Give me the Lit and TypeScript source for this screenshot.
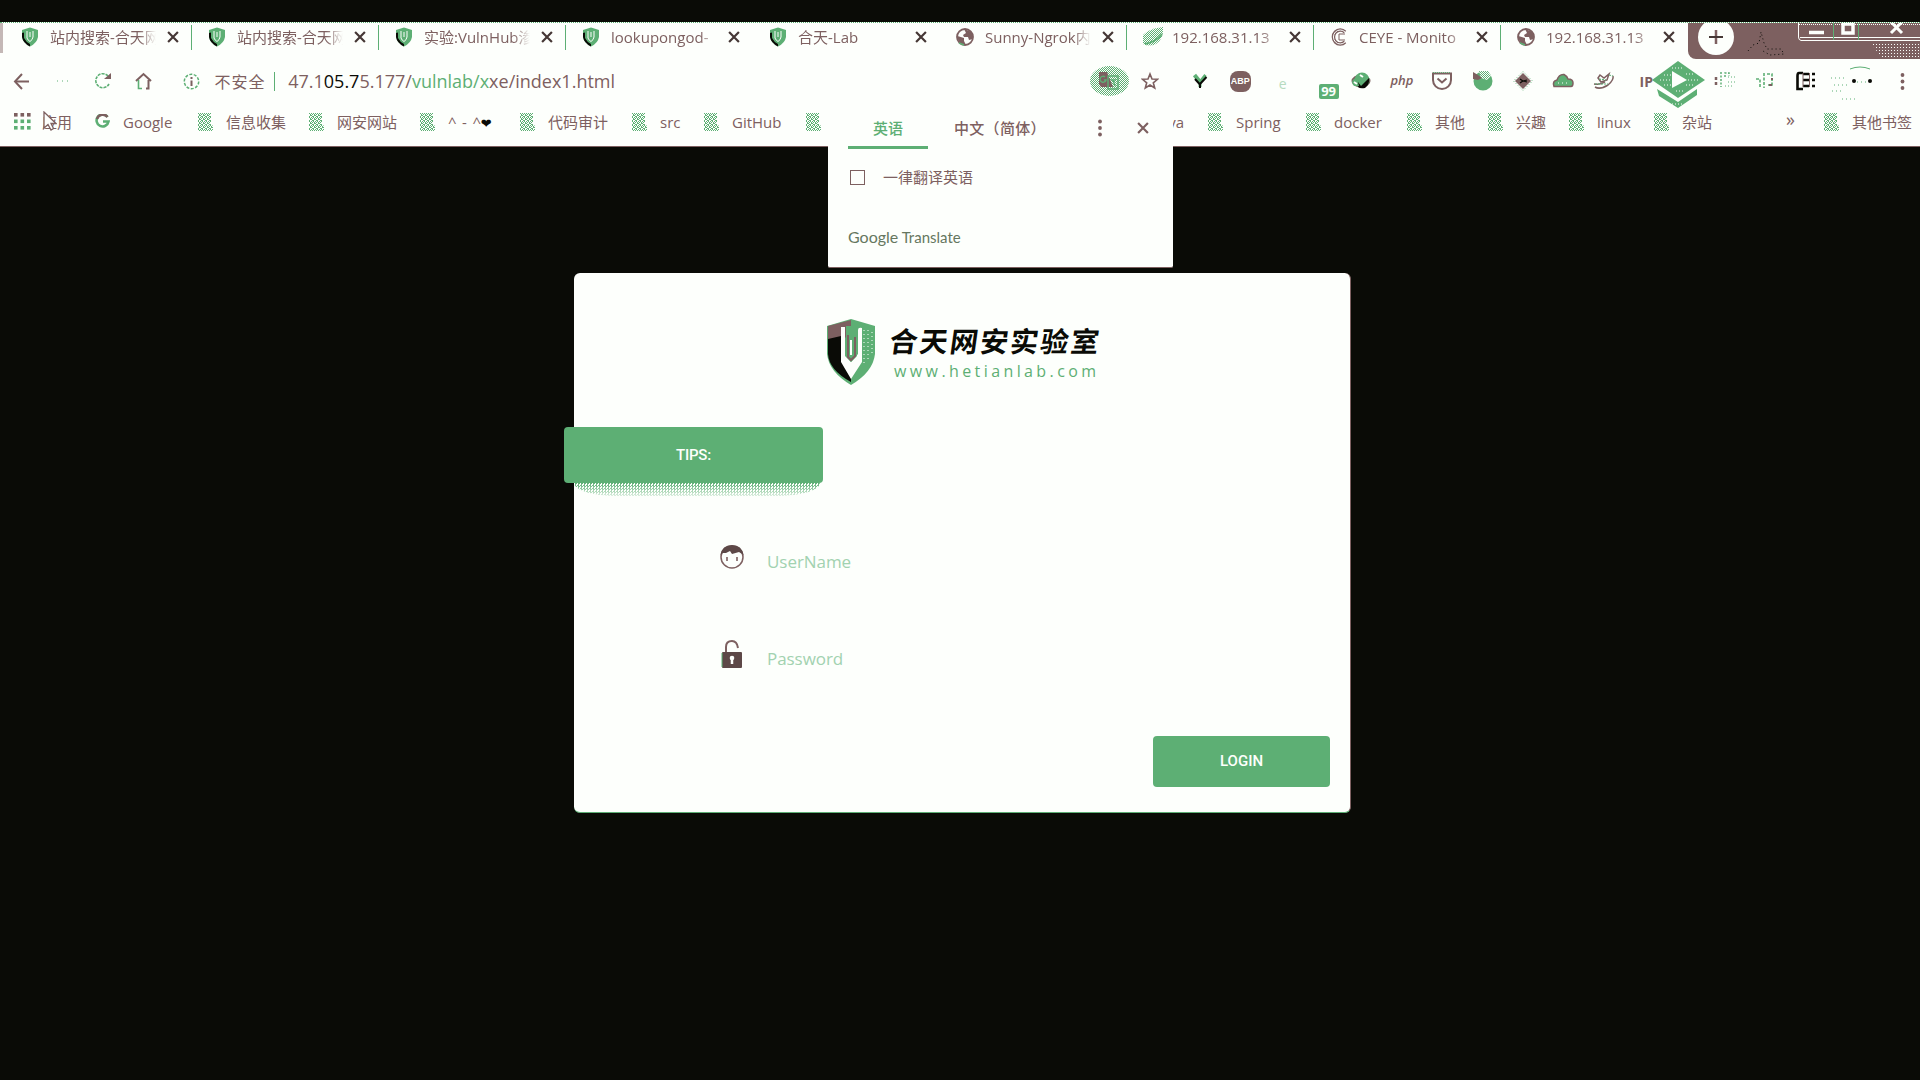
import { LitElement, html, svg, css } from "lit";

const G = "#5daf74", B = "#7d6060", K = "#0a0b06", W = "#fdfffc";

const shield = html`<svg class="fav" width="18" height="20" viewBox="0 0 18 20"><path d="M1 3 9 0.5 17 3V10Q16 16 9 19.5 2 16 1 10Z" fill=${G}/><path d="M1 6 3 5.4V11Q5 15 9 17V19.5Q2 16 1 10Z" fill=${K}/><path d="M6 4V11Q7 13.500 9 14.500 11.500 13 12 10V4" fill="none" stroke=${W} stroke-width="1"/><path d="M9 5V10" stroke=${W} stroke-width="1"/></svg>`;
const globe = html`<svg class="fav" width="18" height="20" viewBox="0 0 18 20"><circle cx="9" cy="10" r="8" fill=${W} stroke=${B} stroke-width="1.800"/><path d="M1.500 9 8 11V14L10 18Q3 18 1.500 11ZM8 2 16 5 17 12 13 13 12 10H8L7 8 10 6Z" fill=${B}/><path d="M3 16 8 18" stroke=${G} stroke-width="1.500"/></svg>`;
const leaf = html`<svg class="fav leaf" width="22" height="20" viewBox="0 0 22 20"><path d="M1 8Q6 2 21 0 22 12 14 17 7 20 1 17Z" fill="url(#dots)"/><path d="M3 17Q14 15 20 7" fill="none" stroke=${G} stroke-width="2"/></svg>`;
const ceye = html`<svg class="fav" width="18" height="20" viewBox="0 0 18 20"><path d="M15 5A6.800 7 0 1 0 15 15" fill="none" stroke=${B} stroke-width="3.500"/><path d="M15 5A6.800 7 0 1 0 15 15" fill="none" stroke=${W} stroke-width="1"/><path d="M15 7H9V13H15" fill="none" stroke=${B}/></svg>`;

const tabs = [
  { icon: shield, text: "站内搜索-合天网", sep: true },
  { icon: shield, text: "站内搜索-合天网", sep: true },
  { icon: shield, text: "实验:VulnHub渗", sep: true },
  { icon: shield, text: "lookupongod-", sep: false },
  { icon: shield, text: "合天-Lab", sep: false },
  { icon: globe, text: "Sunny-Ngrok内", sep: true },
  { icon: leaf, text: "192.168.31.13", sep: true },
  { icon: ceye, text: "CEYE - Monito", sep: true },
  { icon: globe, text: "192.168.31.13", sep: false },
];

const folder = html`<svg class="bi" width="15" height="18" viewBox="0 0 15 18"><path d="M0 0H13V11L15 13V18H0Z" fill="url(#weave)"/></svg>`;
const apps = html`<svg class="bi" width="17" height="17" viewBox="0 0 17 17">${[0, 1, 2].map(r => [0, 1, 2].map(c => svg`<rect x=${c * 6.500} y=${r * 6.500} width="3.600" height="3.600" fill=${r === 0 ? B : G}/>`))}</svg>`;
const google = html`<svg class="bi" width="15" height="15" viewBox="0 0 15 15"><path d="M12.500 3A6 6 0 1 0 13.500 7.500H8" fill="none" stroke=${G} stroke-width="2.600"/><path d="M12.500 3A6 6 0 0 0 2 5" fill="none" stroke=${B} stroke-width="2.600"/></svg>`;

const marks: { i: unknown; t: unknown; w: number }[] = [
  { i: apps, t: "应用", w: 81 }, { i: google, t: "Google", w: 103 },
  { i: folder, t: "信息收集", w: 111 }, { i: folder, t: "网安网站", w: 111 },
  { i: folder, t: html`<span class="face">^ - ^<b>❤</b></span>`, w: 100 }, { i: folder, t: "代码审计", w: 112 },
  { i: folder, t: "src", w: 72 }, { i: folder, t: "GitHub", w: 102 },
  { i: folder, t: "", w: 322 }, { i: folder, t: "Java", w: 80 },
  { i: folder, t: "Spring", w: 98 }, { i: folder, t: "docker", w: 101 },
  { i: folder, t: "其他", w: 81 }, { i: folder, t: "兴趣", w: 81 },
  { i: folder, t: "linux", w: 85 }, { i: folder, t: "杂站", w: 132 },
];

const ic = (body: unknown, w = 24) => html`<svg width=${w} height="24" viewBox="0 0 ${w} 24">${body}</svg>`;
const exts = [
  ic(svg`<path d="M6.500 6 12 13" stroke=${G} stroke-width="4"/><path d="M17.500 6 12 13V18" fill="none" stroke=${G} stroke-width="3"/><path d="M7 10 12 15.500V19M12 15 18.500 8" fill="none" stroke=${K} stroke-width="2"/>`),
  html`<span class="abp">ABP</span>`,
  html`<span class="faint">e</span>`,
  html`<span class="n99">99</span>`,
  ic(svg`<ellipse cx="12" cy="12" rx="9.500" ry="6.500" fill=${B}/><circle cx="13" cy="11" r="7.500" fill=${G}/><path d="M9 13 12 17 20 9Q21 15 16 19 11 20 9 18Z" fill=${K}/><path d="M3 13Q4 9 8 9L10 17Q6 18 4 16Z" fill=${G}/><path d="M11 6 14 8M5 13 8 15" stroke=${W} stroke-width="2"/>`),
  html`<span class="php">php</span>`,
  ic(svg`<path d="M3 4.500H21V11A9 9 0 0 1 3 11Z" fill="none" stroke=${B} stroke-width="2"/><path d="M3 3.500H21" stroke=${G} stroke-dasharray="1 1"/><path d="M7.500 9.500 12 13.500 16.500 9.500" fill="none" stroke=${B} stroke-width="2"/>`),
  ic(svg`<circle cx="12" cy="12" r="9.500" fill=${G}/><path d="M8 2H17L20 7 16 11 10 9Z" fill=${W}/><path d="M8 2H17L20 7 16 11 10 9Z" fill="url(#dots)"/><path d="M2 3 7 6 11 9 7 11 2 10Z" fill=${B}/>`),
  ic(svg`<path d="M12 4 20 12 12 20 4 12Z" fill=${B}/><path d="M12 2.500 21.500 12 12 21.500 2.500 12Z" fill="none" stroke=${G} stroke-dasharray="1 2"/><path d="M9 10 12 12 16 11M9 14 12 12 16 13" stroke=${K} stroke-width="1.200" fill="none"/>`),
  ic(svg`<path d="M3 17.500Q1 12 6 11 8 5 13 5.500 16 7 17 10 22 10 22 14 22 17.500 20 17.500Z" fill=${G} stroke=${B} stroke-width="1.500"/><path d="M7 14H19" stroke=${W} stroke-dasharray="1 3"/>`),
  ic(svg`<path d="M6 9 8 6 12 9 17 5 15 11 9 13ZM2 15Q9 16 13 13M21 7Q22 11 16 16 8 21 3 18" fill="none" stroke=${B} stroke-width="1.500"/><path d="M7 10 14 11M3 15 16 15M17 6 21 7" stroke=${G} stroke-width="1.200" stroke-dasharray="2 1"/>`),
  html`<span class="ip">IP</span>`,
  html``,
  ic(svg`<path d="M3 8V18" stroke=${B} stroke-width="2.500" stroke-dasharray="3 2"/><path d="M8 3V18M12 8V4H16V7" fill="none" stroke=${G} stroke-width="1.500" stroke-dasharray="2 1.500"/><path d="M15 8H22M15 13H22M12 17H20" stroke=${G} stroke-dasharray="1 2"/>`),
  ic(svg`<path d="M3 10H7V18M11 4V19M14 5H19V16H15" fill="none" stroke=${G} stroke-width="1.600" stroke-dasharray="3 1.500"/><path d="M19 9V11M16 16H19" stroke=${B} stroke-width="2"/>`),
  ic(svg`<path d="M9 4H5Q3.500 4 3.500 7V20H9" fill="none" stroke=${K} stroke-width="2.600"/><path d="M9 5H15M9 11H15M9 17H15" stroke=${K} stroke-width="2.500"/><path d="M9 4V18M15.500 4V18" stroke=${B} stroke-width="1"/><path d="M18 5H21M18 11H21M18 17H21" stroke=${K} stroke-width="2.500"/>`),
];

class AppRoot extends LitElement {
  static styles = css`
    :host { display: block; width: 1920px; height: 1080px; overflow: hidden; position: relative; background: #0a0b06; color: #7d6060; font-family: "Open Sans", "Noto Sans CJK SC", sans-serif; }
    * { box-sizing: border-box; }
    svg { display: block; flex: none; }
    .defs { position: absolute; width: 0; height: 0; }
    .page { padding-top: 22px; height: 1080px; }
    .chrome { height: 125px; background: #fdfffc; border-bottom: 1px solid #7d6060; display: flex; flex-direction: column; }
    .tabs { height: 37px; display: flex; padding-left: 5px; border-top: 1px dotted #5daf74; flex: none; background: linear-gradient(90deg, #c4b8b6 3px, transparent 3px) 0 0 / 100% 30px no-repeat; }
    .tab { width: 187px; display: flex; align-items: center; padding: 0 13px 8px 16px; flex: none; }
    .tab.sep { background: linear-gradient(#5daf74, #5daf74) right 2px / 1px 25px no-repeat; }
    .fav { margin: 0 11px 0 0; }
    .fav.leaf { margin: 0 8px 0 -1px; }
    .title { width: 106px; font-size: 15px; line-height: 22px; white-space: nowrap; overflow: hidden; -webkit-mask-image: linear-gradient(90deg, #000 84%, transparent); flex: none; }
    .x { margin-left: auto; }
    .strip { flex: 1; background: #7d6060; border-bottom-left-radius: 8px; display: flex; justify-content: space-between; overflow: hidden; }
    .new { width: 36px; height: 36px; border-radius: 50%; background: #fdfffc; margin: -4px 0 0 10px; display: grid; place-items: center; }
    .bar { height: 44px; display: flex; align-items: center; flex: none; padding-left: 13px; }
    .nav { width: 41px; }
    .nav.n1 { width: 40px; }
    .nav.n2 { width: 49px; }
    .nav.n3 { width: 31px; }
    .secure { font-size: 16px; width: 60px; white-space: nowrap; letter-spacing: 1px; }
    .rule { width: 1px; height: 19px; background: #5daf74; margin-right: 13px; }
    .url { font-size: 18px; letter-spacing: 0; white-space: nowrap; width: 804px; }
    .url b { font-weight: 400; color: #0a0b06; }
    .url i { font-style: normal; color: #5daf74; }
    .tr { width: 39px; height: 30px; flex: none; border-radius: 50%; background: repeating-conic-gradient(#5daf74 0 25%, #fdfffc 0 50%) 0 0 / 2px 2px; display: grid; place-items: center; }
    .star { margin: 0 21px 0 12px; }
    .ext { width: 40.4px; display: flex; justify-content: center; align-items: center; height: 44px; flex: none; }
    .abp { width: 21px; height: 21px; border-radius: 8px; background: #7d6060; color: #fdfffc; font: 700 9px/21px "Liberation Sans", sans-serif; text-align: center; }
    .faint { color: #b7dbc0; font-size: 14px; padding: 4px 0 0 4px; }
    .n99 { width: 20px; height: 15px; border-radius: 2px; background: #5daf74; color: #fdfffc; font: 700 13px/15px "Open Sans", sans-serif; text-align: center; margin: 20px 0 0 15px; }
    .php { font: italic 600 13px "Open Sans", sans-serif; padding-bottom: 2px; }
    .ip { font: 700 14px "Open Sans", sans-serif; margin-left: 4px; }
    .marks { flex: 1; display: flex; align-items: center; padding: 0 0 6px 14px; }
    .mark { display: flex; align-items: center; flex: none; font-size: 15px; line-height: 24px; white-space: nowrap; }
    .slot { width: 28px; flex: none; }
    .face { letter-spacing: .8px; }
    .face b { font: 13px "DejaVu Sans", sans-serif; color: #0a0b06; margin-left: -1px; }
    .more { width: 38px; font-size: 18px; line-height: 20px; padding-bottom: 6px; }
    .card { width: 777px; height: 540px; margin: 126px 0 0 574px; background: #fdfffc; border-radius: 6px; border-bottom: 1px solid #5daf74; border-right: 1px solid #7d6060; display: flex; flex-direction: column; }
    .logo { display: flex; margin: 45px 0 0 251px; height: 68px; }
    .brand { margin-left: 13px; }
    .cn { font: 700 28px/32px "Noto Sans CJK SC", sans-serif; color: #0a0b06; letter-spacing: 2.2px; transform: skewX(-8deg); white-space: nowrap; margin-top: 6px; }
    .en { color: #5daf74; font-size: 16px; line-height: 18px; letter-spacing: 3.4px; white-space: nowrap; margin: 6px 0 0 4px; }
    .tips { margin: 41px 0 0 -10px; width: 259px; height: 56px; flex: none; background: #5daf74; border-radius: 4px; color: #fdfffc; font: 500 15px/57px Roboto, sans-serif; text-align: center; letter-spacing: -.2px; }
    .shade { width: 246px; height: 13px; border-radius: 0 0 40px 40px / 0 0 13px 13px; background: repeating-conic-gradient(#5daf74 0 25%, #fdfffc 0 50%) 0 0 / 3px 3px; -webkit-mask-image: linear-gradient(#000, rgba(0,0,0,.2)); }
    .field { display: flex; align-items: center; height: 30px; margin-left: 145px; color: #a2d2b0; font-size: 17px; }
    .field span { margin-left: 22px; padding-top: 8px; letter-spacing: -.05px; }
    .f1 { margin-top: 46px; }
    .f2 { margin-top: 67px; }
    .login { width: 177px; height: 51px; background: #5daf74; border-radius: 4px; color: #fdfffc; font: 500 15px/51px Roboto, sans-serif; text-align: center; margin: 67px 0 0 579px; }
    .popup { position: absolute; left: 828px; top: 104px; width: 345px; height: 164px; background: #fdfffc; border-bottom: 1px solid #7d6060; border-radius: 0 0 2px 2px; padding-left: 20px; }
    .ptabs { display: flex; height: 45px; align-items: center; font: 500 15px/44px "Noto Sans CJK SC", sans-serif; }
    .on { width: 80px; height: 45px; color: #5daf74; border-bottom: 3px solid #5daf74; text-align: center; line-height: 47px; }
    .off { width: 146px; padding: 3px 0 0 26px; white-space: nowrap; letter-spacing: .3px; }
    .kebab { margin: 3px 34px 0 23px; }
    .px { margin-top: 3px; }
    .check { display: flex; align-items: center; margin-top: 14px; height: 26px; font-size: 15px; }
    .box { width: 15px; height: 15px; border: 1.500px solid #7d6060; margin: 2px 18px 0 2px; }
    .gt { margin-top: 36px; font: 15px/24px Lato, sans-serif; color: #66775f; }
    .gt b { font-weight: 400; font-size: 16px; }
    .play { position: absolute; left: 1652px; top: 60px; }
    .cursor { position: absolute; left: 43px; top: 111px; }
  `;
  x(size = 11, color = B) {
    return html`<svg class="x" width=${size} height=${size} viewBox="0 0 11 11"><path d="M1 1 10 10M10 1 1 10" stroke=${color} stroke-width="2"/></svg>`;
  }
  dots(cls: string) {
    return html`<svg class=${cls} width="6" height="18" viewBox="0 0 6 18"><circle cx="3" cy="2.500" r="1.900" fill=${B}/><circle cx="3" cy="9" r="1.900" fill=${B}/><circle cx="3" cy="15.500" r="1.900" fill=${B}/></svg>`;
  }
  render() {
    return html`
    <svg class="defs"><defs><pattern id="dots" width="2" height="2" patternUnits="userSpaceOnUse"><path d="M0 0H1V1H0ZM1 1H2V2H1Z" fill=${G}/></pattern><pattern id="weave" width="4" height="4" patternUnits="userSpaceOnUse"><path d="M0 0H1V1H0ZM2 0H3V1H2ZM1 1H2V2H1ZM3 1H4V2H3ZM1 2H3V3H1ZM0 3H1V4H0ZM3 3H4V4H3Z" fill=${G}/></pattern></defs></svg>
    <div class="page">
      <div class="chrome">
        <div class="tabs">
          ${tabs.map(t => html`<div class="tab ${t.sep ? "sep" : ""}">${t.icon}<span class="title">${t.text}</span>${this.x(12, "#453735")}</div>`)}
          <div class="strip">
            <div class="new"><svg width="16" height="16" viewBox="0 0 16 16"><path d="M8 1V15" stroke=${B} stroke-width="2.500"/><path d="M1 8H15" stroke="#453735" stroke-width="2.200"/></svg></div>
            <svg width="42" height="34" viewBox="0 0 42 34"><path d="M3 28 8 22 14 20 16 9 19 20 22 26 36 26 39 31 25 32 18 28" fill="none" stroke=${K} stroke-dasharray="1 3"/></svg>
            <svg width="122" height="36" viewBox="0 0 122 36"><path d="M0.500 0V14Q0.500 17 3 17.500H122M2 14.500H122" fill="none" stroke=${W} stroke-width="1"/><path d="M1 1.500H122" stroke=${W} stroke-dasharray="1 1"/><path d="M35.500 0V17M60.500 0V17" stroke=${G}/><path d="M11 9.500H26" stroke=${W} stroke-width="3.500"/><rect x="45" y="1" width="10" height="9" fill=${B} stroke=${W} stroke-width="3.500"/><path d="M93 -1 104 10M104 -1 93 10" stroke=${W} stroke-width="3"/><path d="M72 19H122V34H83Z" fill="url(#wd)"/><defs><pattern id="wd" width="3" height="3" patternUnits="userSpaceOnUse"><rect width="1" height="1" fill=${W}/></pattern></defs></svg>
          </div>
        </div>
        <div class="bar">
          <div class="nav"><svg width="17" height="17" viewBox="0 0 17 17"><path d="M9 1 2 8.500 9 16" fill="none" stroke=${B} stroke-width="2"/><path d="M2 8.500H16" stroke=${B} stroke-width="2"/></svg></div>
          <div class="nav n1"><svg width="18" height="4" viewBox="0 0 18 4"><path d="M3 2H16" stroke=${G} stroke-dasharray="1 4"/></svg></div>
          <div class="nav"><svg width="18" height="18" viewBox="0 0 18 18"><path d="M14 4A7 7 0 1 0 15 12" fill="none" stroke=${G} stroke-width="1.600" stroke-dasharray="3 1"/><path d="M17 1V7H10Z" fill=${B}/></svg></div>
          <div class="nav n2"><svg width="17" height="18" viewBox="0 0 17 18"><path d="M1 9 8.500 2 16 9M13.500 8V16.500H11" fill="none" stroke=${B} stroke-width="2"/><path d="M3.500 8V16.500H7" fill="none" stroke=${G} stroke-width="1.600"/></svg></div>
          <div class="nav n3"><svg width="17" height="17" viewBox="0 0 17 17"><circle cx="8.500" cy="8.500" r="7.200" fill="none" stroke=${G} stroke-width="1.500" stroke-dasharray="3 1.500"/><path d="M8.500 7.500V13M8.500 4V6" stroke=${B} stroke-width="2"/></svg></div>
          <span class="secure">不安全</span><span class="rule"></span>
          <span class="url">47.1<b>05.7</b>5.177/<i>vulnlab/x</i>xe/index1.html</span>
          <div class="tr"><svg width="20" height="20" viewBox="0 0 20 20"><path d="M0 1H8L14 16H2L0 13Z" fill=${B}/><rect x="9" y="5" width="10" height="13" fill="none" stroke=${G} stroke-width="1.500"/><path d="M6 6A3 3 0 1 0 7 9H5M12 9H17M14 9 16 15" fill="none" stroke=${G} stroke-width="1.400"/></svg></div>
          <svg class="star" width="18" height="18" viewBox="0 0 18 18"><path d="M9 2 11 7 16.500 7.300 12.300 10.800 13.700 16 9 13 4.300 16 5.700 10.800 1.500 7.300 7 7Z" fill="none" stroke=${B} stroke-width="1.600"/></svg>
          ${exts.map(e => html`<div class="ext">${e}</div>`)}
          <svg width="94" height="40" viewBox="0 0 94 40"><path d="M24 8Q34 4 44 8" fill="none" stroke=${G}/><circle cx="28" cy="20" r="2" fill=${K}/><circle cx="44" cy="20" r="2" fill=${K}/><path d="M31 21H41M5 17H20M8 24H22M6 30H18M16 38H30" stroke=${G} stroke-dasharray="1 3"/><circle cx="76.500" cy="14" r="1.900" fill=${B}/><circle cx="76.500" cy="20.500" r="1.900" fill=${B}/><circle cx="76.500" cy="27" r="1.900" fill=${B}/></svg>
        </div>
        <div class="marks">
          ${marks.map(m => html`<div class="mark" style="width:${m.w}px"><span class="slot">${m.i}</span>${m.t}</div>`)}
          <span class="more">»</span>
          <div class="mark"><span class="slot">${folder}</span>其他书签</div>
        </div>
      </div>
      <div class="card">
        <div class="logo">
          <svg width="52" height="68" viewBox="0 0 52 68"><path d="M2 8 26 1 50 8V36Q48 54 26 67 4 54 2 36Z" fill=${G}/><path d="M3 8 26 2V14L16 24H3Z" fill=${B}/><path d="M3 21 16 18V42L26 60V64Q4 52 3 36Z" fill=${K}/><path d="M16 9H20V38L26 44 33 36V12Q33 9 37 10V44L26 61 16 44Z" fill=${W}/><path d="M21 8H32V38L26 44 21 38Z" fill=${G}/><path d="M23 17V39L26 42 30 38V19" fill="none" stroke=${B} stroke-width="2"/><path d="M26 22V37" stroke=${W} stroke-width="2"/><path d="M39 12V48M43 12V44M47 14V38" stroke=${W} stroke-dasharray="1 3"/></svg>
          <div class="brand"><div class="cn">合天网安实验室</div><div class="en">www.hetianlab.com</div></div>
        </div>
        <div class="tips">TIPS:</div>
        <div class="shade"></div>
        <div class="field f1"><svg width="26" height="26" viewBox="0 0 26 26"><circle cx="13" cy="13" r="11" fill=${W} stroke=${B} stroke-width="1.500"/><path d="M1.500 11Q3 1 13 1 23 1 24.500 11L20 8 13 10 11 7 7 9 4 9Z" fill="#5d4847"/><path d="M8 13V17M18 13V17" stroke=${B} stroke-width="1.600"/></svg><span>UserName</span></div>
        <div class="field f2"><svg width="26" height="30" viewBox="0 0 26 30"><path d="M7 13V8Q7 2 13 2 18 2 19 9" fill="none" stroke=${B} stroke-width="2"/><rect x="3" y="13" width="20" height="16" rx="1" fill="#5d4847"/><path d="M3 14V28" stroke=${G}/><circle cx="13" cy="19" r="2.300" fill=${W}/><path d="M13 19V25" stroke=${W} stroke-width="2.500"/></svg><span>Password</span></div>
        <div class="login">LOGIN</div>
      </div>
    </div>
    <div class="popup">
      <div class="ptabs"><div class="on">英语</div><div class="off">中文（简体）</div>${this.dots("kebab")}<span class="px">${this.x(12)}</span></div>
      <div class="check"><span class="box"></span>一律翻译英语</div>
      <div class="gt"><b>Google</b> Translate</div>
    </div>
    <svg class="play" width="54" height="50" viewBox="0 0 54 50"><path d="M26 1 53 20 26 38 0 20Z" fill=${G}/><path d="M5 29 26 42 45 29V35L26 48 7 36Z" fill=${G}/><path d="M12 15H20M8 20H20M12 25H20M20 8H32M24 31H32M36 20H46M34 25H42M34 14H42M20 44H32" stroke=${W} stroke-dasharray="1 2"/><path d="M20 11 35 20 20 28Z" fill=${W}/></svg>
    <svg class="cursor" width="14" height="20" viewBox="0 0 14 20"><path d="M1 1V17L5 13.500 8 19 10.500 17.500 8 12.500H13Z" fill=${W} stroke=${B} stroke-width="1.300"/></svg>`;
  }
}
customElements.define("app-root", AppRoot);
